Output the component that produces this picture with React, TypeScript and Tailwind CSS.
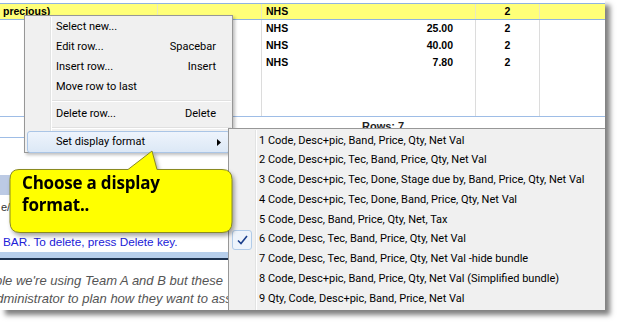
import React from 'react';

const menuFont = { fontFamily: 'Roboto, Lato, sans-serif' };
const calloutFont = { fontFamily: '"Open Sans", "Noto Sans", sans-serif' };

const formats = [
  '1 Code, Desc+pic, Band, Price, Qty, Net Val',
  '2 Code, Desc+pic, Tec, Band, Price, Qty, Net Val',
  '3 Code, Desc+pic, Tec, Done, Stage due by, Band, Price, Qty, Net Val',
  '4 Code, Desc+pic, Tec, Done, Band, Price, Qty, Net Val',
  '5 Code, Desc, Band, Price, Qty, Net, Tax',
  '6 Code, Desc, Tec, Band, Price, Qty, Net Val',
  '7 Code, Desc, Tec, Band, Price, Qty, Net Val -hide bundle',
  '8 Code, Desc+pic, Band, Price, Qty, Net Val (Simplified bundle)',
  '9 Qty, Code, Desc+pic, Band, Price, Net Val',
];

const rows = [
  { price: '25.00', qty: '2' },
  { price: '40.00', qty: '2' },
  { price: '7.80', qty: '2' },
];

function MenuItem({ label, shortcut }: { label: string; shortcut?: string }) {
  return (
    <div className="h-[20px] flex items-center justify-between pl-[31px] pr-[16px] text-[11px] text-black">
      <span>{label}</span>
      {shortcut && <span>{shortcut}</span>}
    </div>
  );
}

function Separator() {
  return (
    <div className="h-[7px] flex items-center pl-[27px] pr-[1px]">
      <div className="w-full border-t border-[#e0e0e0] border-b-white border-b" />
    </div>
  );
}

function ContextMenu() {
  return (
    <div
      className="absolute left-[24px] top-[15px] w-[209px] h-[138px] bg-[#f0f0f0] border border-[#979797] shadow-[2px_2px_3px_rgba(0,0,0,0.25)] pt-[1px]"
      style={menuFont}
    >
      <div className="absolute left-[25px] top-[1px] bottom-[1px] w-[2px] border-l border-[#e2e3e3] border-r border-r-white" />
      <MenuItem label="Select new..." />
      <MenuItem label="Edit row..." shortcut="Spacebar" />
      <MenuItem label="Insert row..." shortcut="Insert" />
      <MenuItem label="Move row to last" />
      <Separator />
      <MenuItem label="Delete row..." shortcut="Delete" />
      <Separator />
      <div className="relative mx-[2px] h-[22px] rounded-[3px] border border-[#aac5e6] bg-gradient-to-b from-[#eef4fc] to-[#dce8f6] flex items-center justify-between pl-[28px] pr-[8px] text-[11px] text-black">
        <span>Set display format</span>
        <svg width="4" height="7" viewBox="0 0 4 7">
          <path d="M0 0 L4 3.5 L0 7 Z" fill="#000" />
        </svg>
      </div>
    </div>
  );
}

function SubMenu() {
  return (
    <div
      className="absolute left-[228px] top-[128px] w-[400px] h-[200px] bg-[#f0f0f0] border border-[#979797] pt-[2px]"
      style={menuFont}
    >
      <div className="absolute left-[26px] top-[1px] bottom-0 w-[2px] border-l border-[#e2e3e3] border-r border-r-white" />
      {formats.map((f, i) => (
        <div key={f} className="relative h-[19.75px] flex items-center pl-[30px] text-[11px] text-black whitespace-nowrap">
          {i === 5 && (
            <div className="absolute left-[3px] top-0 w-[20px] h-[20px] rounded-[3px] border border-[#b1cbe8] bg-[#eef4fb] flex items-center justify-center">
              <svg width="11" height="10" viewBox="0 0 11 10">
                <path d="M1 5.5 L4 8.5 L10 1" fill="none" stroke="#1b3f8c" strokeWidth="1.6" />
              </svg>
            </div>
          )}
          <span>{f}</span>
        </div>
      ))}
    </div>
  );
}

function Callout() {
  return (
    <div className="absolute left-[8px] top-[148px] w-[230px] h-[92px] drop-shadow-[2px_3px_2px_rgba(0,0,0,0.35)]">
      <svg className="absolute inset-0" width="230" height="92" viewBox="0 0 230 92">
        <path
          d="M11 21.5 H120 L144 3 L149 21.5 H214 Q224 21.5 224 31.5 V74 Q224 84.5 214 84.5 H12 Q2 84.5 2 74 V31.5 Q2 21.5 11 21.5 Z"
          fill="#ffff00"
          stroke="#8a8a20"
          strokeWidth="1"
        />
      </svg>
      <div
        className="absolute left-[14px] top-[24px] text-[17px] leading-[22px] font-bold text-black tracking-[-0.2px]"
        style={calloutFont}
      >
        Choose a display
        <br />
        format..
      </div>
    </div>
  );
}

export default function App() {
  return (
    <div className="w-[618px] h-[324px] bg-white">
      <div
        className="relative w-[605px] h-[310px] overflow-hidden bg-white shadow-[5px_5px_5px_rgba(0,0,0,0.5)]"
        style={{ fontFamily: '"Liberation Sans", Arial, sans-serif' }}
      >
        <div className="h-[3px]" />
        <div className="h-[17px] border-y border-[#8fb3e1] bg-[#ffff78] grid grid-cols-[158px_104px_214px_64px_65px] text-[10.5px] font-bold text-black">
          <div className="border-r border-[#e8e8c0] pl-[3px] leading-[15px]">precious)</div>
          <div className="border-r border-[#e8e8c0]" />
          <div className="border-r border-[#e8e8c0] pl-[4px] leading-[15px]">NHS</div>
          <div className="border-r border-[#e8e8c0] text-center leading-[15px]">2</div>
          <div />
        </div>
        <div className="h-[96px] grid grid-cols-[158px_104px_214px_64px_65px] text-[10.5px] font-bold text-black">
          <div className="border-r border-[#dcdcdc]" />
          <div className="border-r border-[#dcdcdc]" />
          <div className="border-r border-[#dcdcdc]">
            {rows.map((r, i) => (
              <div key={i} className="h-[17px] flex items-center justify-between pl-[4px] pr-[22px]">
                <span>NHS</span>
                <span>{r.price}</span>
              </div>
            ))}
          </div>
          <div className="border-r border-[#dcdcdc]">
            {rows.map((r, i) => (
              <div key={i} className="h-[17px] flex items-center justify-center">
                {r.qty}
              </div>
            ))}
          </div>
          <div />
        </div>
        <div className="h-[22px] border-y border-[#9ebde6] pl-[362px] pt-[3px] text-[11px] font-bold text-[#222] leading-[12px]">
          Rows: 7
        </div>
        <div className="h-[37px]" />
        <div className="h-[20px] bg-[#bccae4]" />
        <div className="h-[37px] text-[11px] text-[#333] pt-[4px] pl-[1px]">e/</div>
        <div className="h-[20px] flex items-center pl-[3px] text-[11.75px] text-[#2020d8]">
          BAR. To delete, press Delete key.
        </div>
        <div className="h-[6px] bg-[#b7cfec]" />
        <div className="h-[2px] bg-[#1e3350]" />
        <div className="w-[228px] overflow-hidden pt-[12px] text-[13px] leading-[18px] italic text-[#555] whitespace-nowrap">
          <div className="-ml-[5px]">ple we're using Team A and B but these</div>
          <div className="-ml-[11px]">administrator to plan how they want to ass</div>
        </div>

        <ContextMenu />
        <SubMenu />
        <Callout />
      </div>
    </div>
  );
}
